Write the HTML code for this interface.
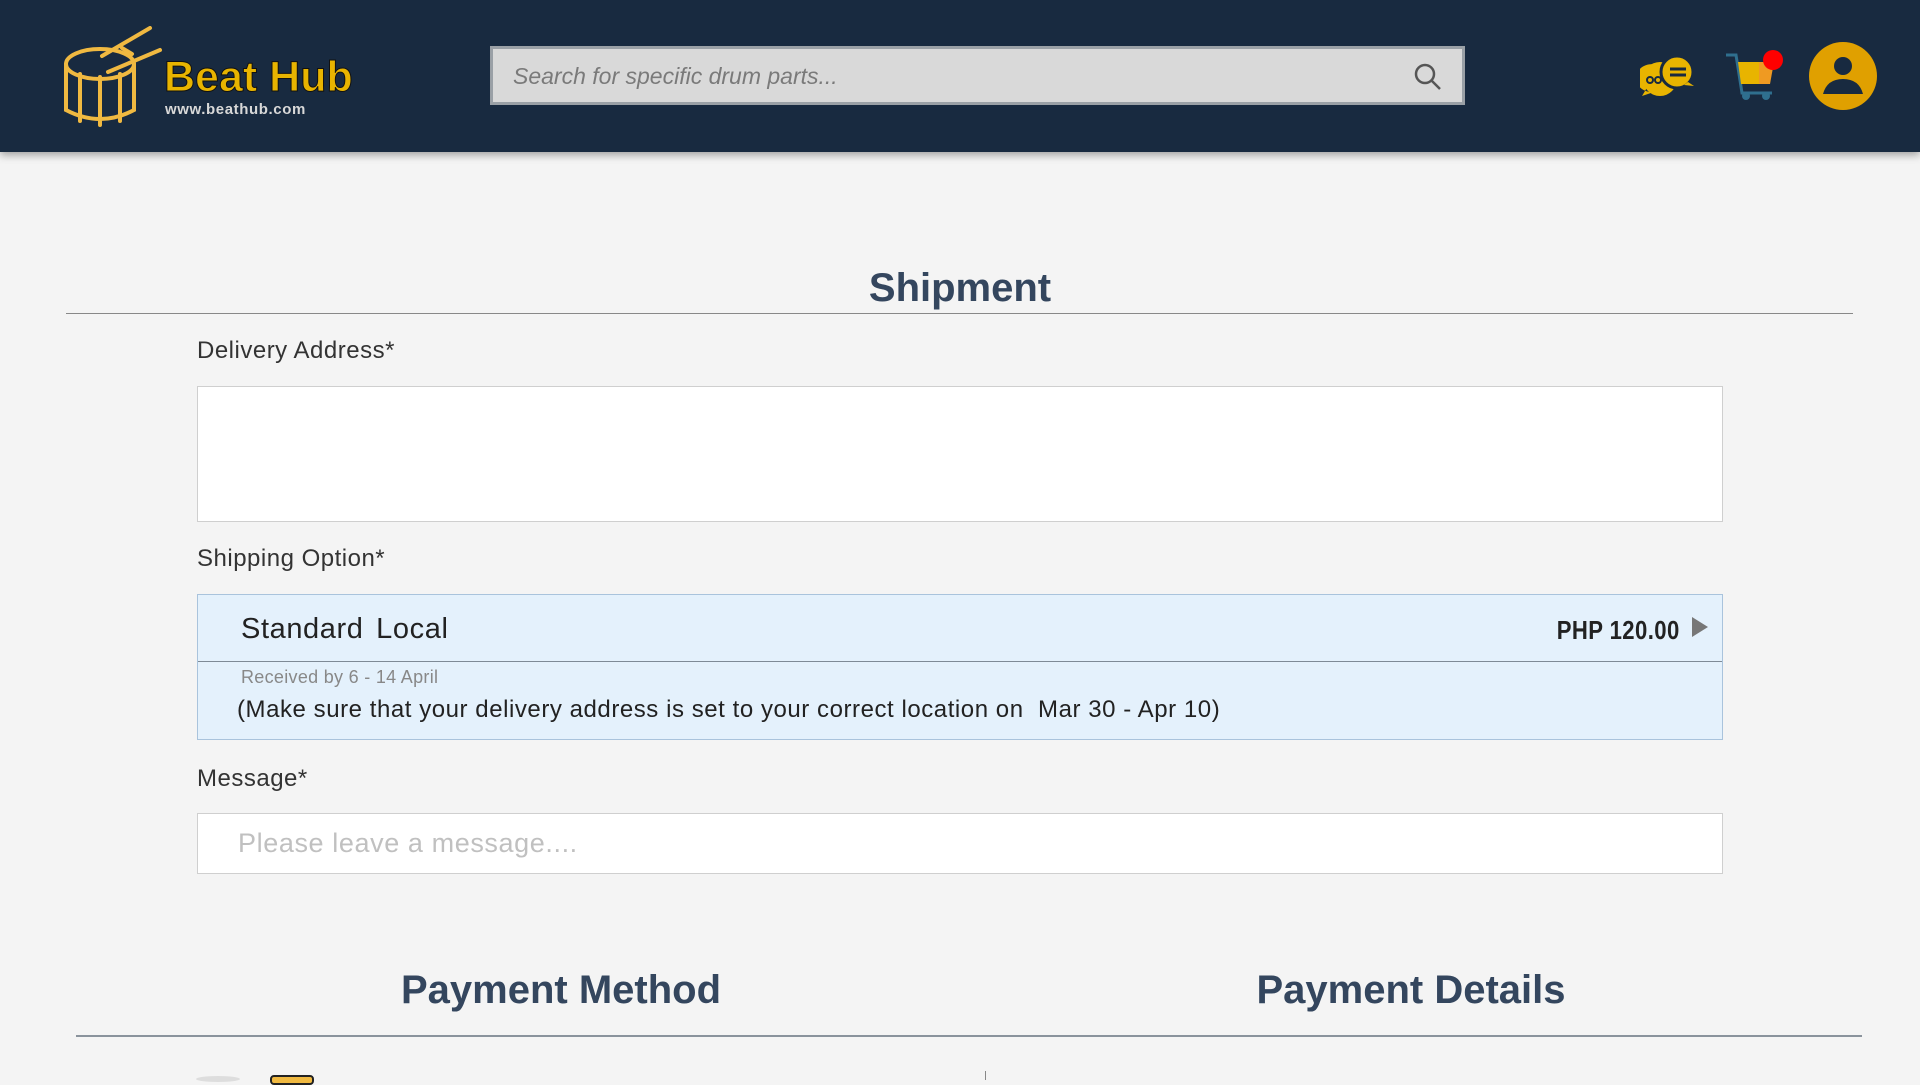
<!DOCTYPE html>
<html><head><meta charset="utf-8"><style>
*{margin:0;padding:0;box-sizing:border-box}
body{width:1920px;height:1080px;overflow:hidden;background:#f4f4f4;font-family:"Liberation Sans",sans-serif;position:relative;color:#2b2b2b}
.hdr{position:absolute;left:0;top:0;width:1920px;height:152px;background:#182a40;box-shadow:0 3px 8px rgba(0,0,0,.35)}
.abs{position:absolute}
.brand{left:164px;top:53px;font-size:43px;font-weight:bold;color:#e8b400;letter-spacing:0;-webkit-text-stroke:1px #111}
.url{left:165px;top:101px;font-size:15px;font-weight:bold;color:#d8d8d8;letter-spacing:.6px}
.search{left:490px;top:46px;width:975px;height:59px;background:#d9d9d9;border:3px solid #9aa0a6}
.search span{position:absolute;left:20px;top:14px;font-size:23px;font-style:italic;color:#7a7a7a}
h2{position:absolute;font-size:40px;font-weight:bold;color:#34465e;transform:translateX(-50%);white-space:nowrap}
.lbl{position:absolute;left:197px;font-size:24px;color:#333;letter-spacing:.5px}
.box{position:absolute;left:197px;width:1526px;background:#fff;border:1px solid #cfcfcf}
</style></head><body>
<div class="hdr">
<svg class="abs" style="left:60px;top:26px" width="110" height="104" viewBox="0 0 110 104" fill="none" stroke="#f0b941" stroke-width="4" stroke-linecap="round">
<ellipse cx="40" cy="38" rx="34" ry="15"/>
<path d="M6 38 V84 Q40 102 74 84 V38"/><path d="M20 48V95M40 51V99M60 48V95"/>
<path d="M42 30 L90 2M48 46 L100 24M62 22 L72 28"/></svg>
<div class="abs brand">Beat Hub</div>
<div class="abs url">www.beathub.com</div>
<div class="abs search"><span>Search for specific drum parts...</span>
<svg class="abs" style="right:20px;top:14px" width="28" height="28" viewBox="0 0 28 28" fill="none" stroke="#555" stroke-width="2.5"><circle cx="11" cy="11" r="9"/><path d="M18 18l8 8"/></svg></div>
<svg class="abs" style="left:1640px;top:52px" width="56" height="48" viewBox="0 0 56 48">
<path d="M20 14 A16 14 0 1 0 14 40 L2 44 L8 34 Z" fill="#e8b400"/><circle cx="20" cy="27" r="17" fill="#e8b400"/>
<circle cx="37" cy="20" r="16" fill="#e8b400" stroke="#182a40" stroke-width="3"/><path d="M48 30 L54 34 L44 33Z" fill="#e8b400"/>
<path d="M30 17h16M30 23h16" stroke="#182a40" stroke-width="3"/><circle cx="10" cy="28" r="3" fill="none" stroke="#182a40" stroke-width="2"/><circle cx="18" cy="28" r="3" fill="none" stroke="#182a40" stroke-width="2"/></svg>
<svg class="abs" style="left:1726px;top:50px" width="60" height="50" viewBox="0 0 60 50">
<path d="M0 5h10l6 38h30" stroke="#2f6f8e" stroke-width="3" fill="none"/>
<path d="M12 12h21v22H15z" fill="#e8b400"/><path d="M33 12h15l-4 22H33z" fill="#ef9a22"/>
<circle cx="20" cy="46" r="4" fill="#2f6f8e"/><circle cx="40" cy="46" r="4" fill="#2f6f8e"/>
<circle cx="47" cy="10" r="10" fill="#f00"/></svg>
<svg class="abs" style="left:1809px;top:42px" width="68" height="68" viewBox="0 0 68 68">
<circle cx="34" cy="34" r="34" fill="#e0a000"/><circle cx="34" cy="24" r="9" fill="#182a40"/><path d="M14 52 Q18 37 34 37 Q50 37 54 52 Z" fill="#182a40"/></svg>
</div>

<h2 style="left:960px;top:266px">Shipment</h2>
<div class="abs" style="left:66px;top:313px;width:1787px;height:1px;background:#888"></div>
<div class="lbl" style="top:337px">Delivery Address*</div>
<div class="box" style="top:386px;height:136px"></div>
<div class="lbl" style="top:545px">Shipping Option*</div>
<div class="box" style="top:594px;height:146px;background:#e4f1fc;border-color:#a9c3dc">
<div class="abs" style="left:0;top:66px;width:100%;height:1px;background:#7e8a96"></div>
<div class="abs" style="left:43px;top:18px;font-size:29px;color:#222;word-spacing:4px;letter-spacing:.6px">Standard Local</div>
<div class="abs" style="right:42px;top:20px;font-size:26px;font-weight:bold;color:#222;transform:scaleX(.85);transform-origin:right;letter-spacing:.5px">PHP 120.00</div>
<div class="abs" style="right:14px;top:22px;width:0;height:0;border-left:16px solid #777;border-top:10px solid transparent;border-bottom:10px solid transparent"></div>
<div class="abs" style="left:43px;top:72px;font-size:18px;color:#888;letter-spacing:.3px">Received by 6 - 14 April</div>
<div class="abs" style="left:39px;top:101px;font-size:24px;color:#222;letter-spacing:.55px">(Make sure that your delivery address is set to your correct location on&nbsp; Mar 30 - Apr 10)</div>
</div>
<div class="lbl" style="top:765px">Message*</div>
<div class="box" style="top:813px;height:61px"><span class="abs" style="left:40px;top:14px;font-size:27px;color:#c0c0c0;letter-spacing:.6px">Please leave a message....</span></div>
<h2 style="left:561px;top:968px">Payment Method</h2>
<h2 style="left:1411px;top:968px">Payment Details</h2>
<div class="abs" style="left:76px;top:1035px;width:1786px;height:2px;background:#8a939c"></div>
<div class="abs" style="left:985px;top:1071px;width:1px;height:9px;background:#888"></div>
<div class="abs" style="left:196px;top:1076px;width:44px;height:6px;border-radius:50%;background:#ddd"></div>
<div class="abs" style="left:270px;top:1075px;width:44px;height:10px;border:2px solid #222;border-radius:4px;background:#f0b941"></div>
</body></html>
